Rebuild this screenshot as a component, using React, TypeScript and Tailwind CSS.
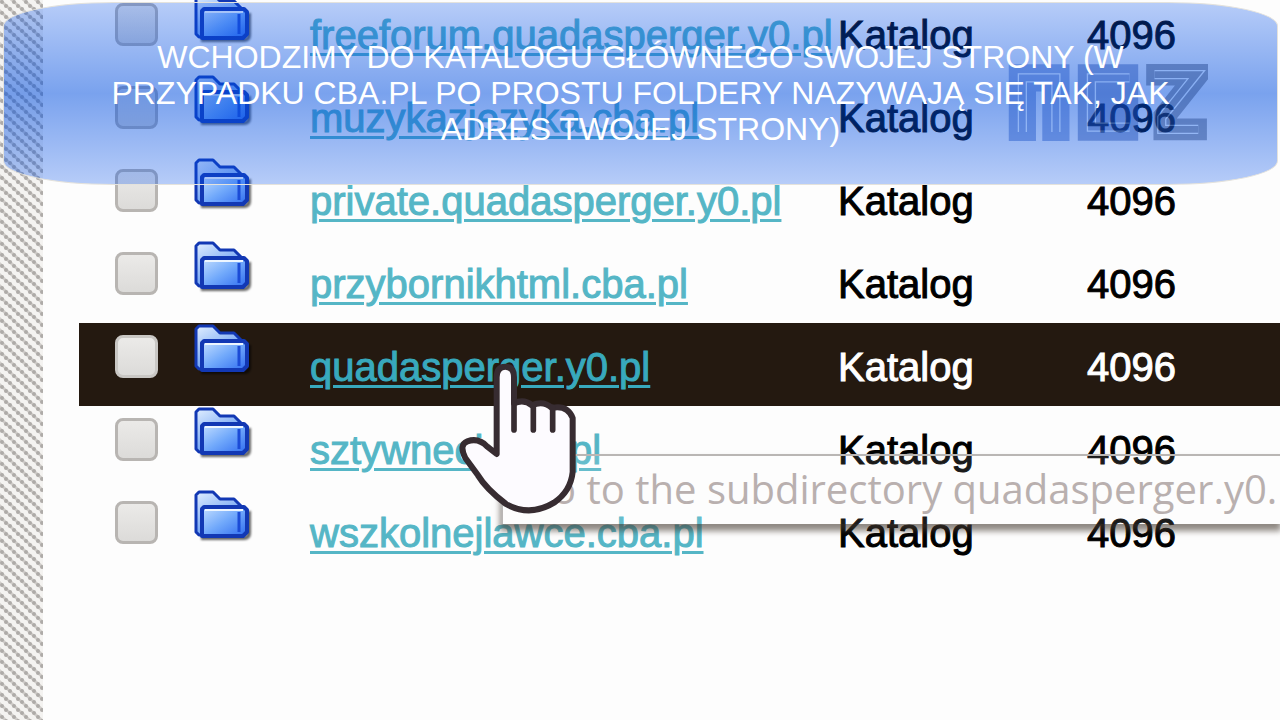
import React from 'react';
import clsx from 'clsx';

interface Entry {
  name: string;
  type: string;
  size: number;
}

const entries: Entry[] = [
  { name: 'freeforum.quadasperger.y0.pl', type: 'Katalog', size: 4096 },
  { name: 'muzykazjezyka.cba.pl', type: 'Katalog', size: 4096 },
  { name: 'private.quadasperger.y0.pl', type: 'Katalog', size: 4096 },
  { name: 'przybornikhtml.cba.pl', type: 'Katalog', size: 4096 },
  { name: 'quadasperger.y0.pl', type: 'Katalog', size: 4096 },
  { name: 'sztywneci.cba.pl', type: 'Katalog', size: 4096 },
  { name: 'wszkolnejlawce.cba.pl', type: 'Katalog', size: 4096 },
];

const hovered = 'quadasperger.y0.pl';

const FolderIcon: React.FC = () => (
  <svg viewBox="0 0 60 56" className="h-[56px] w-[60px]" aria-hidden="true">
    <defs>
      <linearGradient id="folder-back" x1="0" y1="0" x2="0.6" y2="1">
        <stop offset="0" stopColor="#e2efff" />
        <stop offset="1" stopColor="#4f8cf0" />
      </linearGradient>
      <linearGradient id="folder-front" x1="0" y1="0" x2="1" y2="1">
        <stop offset="0" stopColor="#c6e0ff" />
        <stop offset="0.5" stopColor="#71a9fb" />
        <stop offset="1" stopColor="#2f6cf0" />
      </linearGradient>
      <filter id="folder-shadow" x="-20%" y="-20%" width="140%" height="140%">
        <feGaussianBlur stdDeviation="1" />
      </filter>
    </defs>
    <path
      d="M8 49H51Q56 49 56 44V22"
      fill="none"
      stroke="#000"
      strokeOpacity="0.6"
      strokeWidth="4"
      filter="url(#folder-shadow)"
    />
    <path
      d="M3 6L6 3H20L27 10H41L48 17V46H6L3 43Z"
      fill="url(#folder-back)"
      stroke="#1238b4"
      strokeWidth="3"
      strokeLinejoin="round"
    />
    <path
      d="M9 20L11 18H51L54 21V43L50 47H9Z"
      fill="url(#folder-front)"
      stroke="#1238b4"
      strokeWidth="4"
      strokeLinejoin="round"
    />
    <path d="M12 21H50" stroke="#edf6ff" strokeWidth="2" />
    <path d="M46 23V43" stroke="#1b4bd6" strokeWidth="3" />
  </svg>
);

const HandCursor: React.FC = () => (
  <svg viewBox="0 0 420 540" className="h-[180px] w-[140px]" aria-hidden="true">
    <path
      d="M140 312V82Q140 50 166 50Q192 50 192 82V160Q222 146 246 166Q280 150 306 174Q352 164 368 204V366Q362 424 312 458Q240 502 168 462Q108 416 84 376L46 324Q26 284 52 274Q86 262 112 290Z"
      fill="#fdfbff"
      stroke="#372c31"
      strokeWidth="18"
      strokeLinejoin="round"
    />
    <path d="M192 150V240M250 165V240M308 172V240" fill="none" stroke="#372c31" strokeWidth="17" strokeLinecap="round" />
  </svg>
);

// Blocky channel mark: wide dark band with a thin light contour inside
const marks = [
  { points: '42,232 42,42 143,42 143,232', inner: '42,205 42,42 143,42 143,205', dark: '#1f55c8' },
  { points: '391,42 250,42 250,190 391,190', inner: '365,42 250,42 250,190 365,190', dark: '#1f4fb8' },
  { points: '415,32 570,32 470,158 470,197 598,197', inner: '440,32 566,32 462,162 462,197 572,197', dark: '#22458c' },
];

const ChannelMark: React.FC = () => (
  <svg viewBox="0 0 600 232" className="h-[77px] w-[200px] opacity-45" aria-hidden="true">
    {marks.map((m, i) => (
      <g key={m.dark} fill="none">
        <polyline points={m.points} stroke={m.dark} strokeWidth={i === 2 ? 66 : 82} />
        {i === 1 && <path d="M250 116H391" stroke={m.dark} strokeWidth="70" />}
        <polyline points={m.inner} stroke="#94baf8" strokeWidth="28" />
        <polyline points={m.inner} stroke={m.dark} strokeWidth="20" />
      </g>
    ))}
  </svg>
);

const Hatching: React.FC = () => (
  <aside className="relative w-[43px] shrink-0 bg-[#f4f3f1]">
    <svg className="absolute inset-0 h-full w-full" aria-hidden="true">
      <defs>
        <pattern id="hatch" width="12" height="11" patternUnits="userSpaceOnUse">
          <path d="M-12 -11L12 11M0 -11L24 11M-12 0L12 22" stroke="#d2cfcc" strokeWidth="3" />
          <circle cx="2" cy="2" r="2" fill="#aeaba8" />
          <circle cx="6" cy="6" r="2" fill="#aeaba8" />
          <circle cx="10" cy="9" r="2" fill="#aeaba8" />
        </pattern>
      </defs>
      <rect width="100%" height="100%" fill="url(#hatch)" />
    </svg>
  </aside>
);

const Row: React.FC<{ entry: Entry }> = ({ entry }) => {
  const active = entry.name === hovered;
  return (
    <tr className={clsx('h-[83px]', active ? 'bg-[#241910] text-white' : 'text-black')}>
      <td className="pt-3 pl-9 align-top">
        <input
          type="checkbox"
          aria-label={entry.name}
          className={clsx(
            'block size-[43px] appearance-none rounded-lg border-3 bg-linear-to-b from-[#ebeae8] to-[#dcdbd9]',
            active ? 'border-[#c9c7c4]' : 'border-[#b8b5b2]',
          )}
        />
      </td>
      <td className="align-top">
        <FolderIcon />
      </td>
      <td className="pt-1">
        <a
          href="#"
          className={clsx(
            'underline decoration-3 underline-offset-4',
            active ? 'text-[#38a9bd]' : 'text-[#55b6c6]',
          )}
        >
          {entry.name}
        </a>
      </td>
      <td className="pt-1">{entry.type}</td>
      <td className="pt-1">{entry.size}</td>
    </tr>
  );
};

const App: React.FC = () => {
  return (
    <div className="relative flex min-h-screen overflow-hidden bg-[#fdfdfd] font-['Liberation_Sans',Arial,sans-serif]">
      <Hatching />

      <main className="min-w-0 flex-1 pl-9">
        <table className="-mt-[9px] w-full table-fixed border-collapse text-left text-[40px] leading-[48px] whitespace-nowrap [-webkit-text-stroke:1px]">
          <colgroup>
            <col className="w-[114px]" />
            <col className="w-[117px]" />
            <col className="w-[528px]" />
            <col className="w-[249px]" />
            <col />
          </colgroup>
          <tbody>
            {entries.map((entry) => (
              <Row key={entry.name} entry={entry} />
            ))}
          </tbody>
        </table>
      </main>

      {/* Tooltip fading in under the pointer */}
      <div
        role="tooltip"
        className="absolute top-[454px] right-0 left-[501px] h-[70px] border-t-2 border-l-2 border-[#b9b6b4] bg-white/10 shadow-[0_6px_6px_1px_rgba(70,60,50,0.6)]"
      >
        <p className="overflow-hidden pl-5 text-[40px] leading-[66px] whitespace-nowrap text-[#b9b0af] font-['Open_Sans','Noto_Sans',sans-serif]">
          Go to the subdirectory quadasperger.y0.pl
        </p>
      </div>

      <div className="absolute top-[350px] left-[450px]">
        <HandCursor />
      </div>

      {/* Caption banner */}
      <div className="absolute top-[2px] right-[2px] left-[3px] h-[183px] rounded-[110px/24px] border border-[#e4e2dc] bg-linear-to-b from-[#004eec]/28 via-[#004ee0]/52 to-[#004eec]/28">
        <div className="absolute top-[61px] right-[69px]">
          <ChannelMark />
        </div>
        <p className="relative pt-9 text-center text-[32px] leading-9 text-white">
          WCHODZIMY DO KATALOGU GŁÓWNEGO SWOJEJ STRONY (W
          <br />
          PRZYPADKU CBA.PL PO PROSTU FOLDERY NAZYWAJĄ SIĘ TAK, JAK
          <br />
          ADRES TWOJEJ STRONY)
        </p>
      </div>
    </div>
  );
};

export default App;
